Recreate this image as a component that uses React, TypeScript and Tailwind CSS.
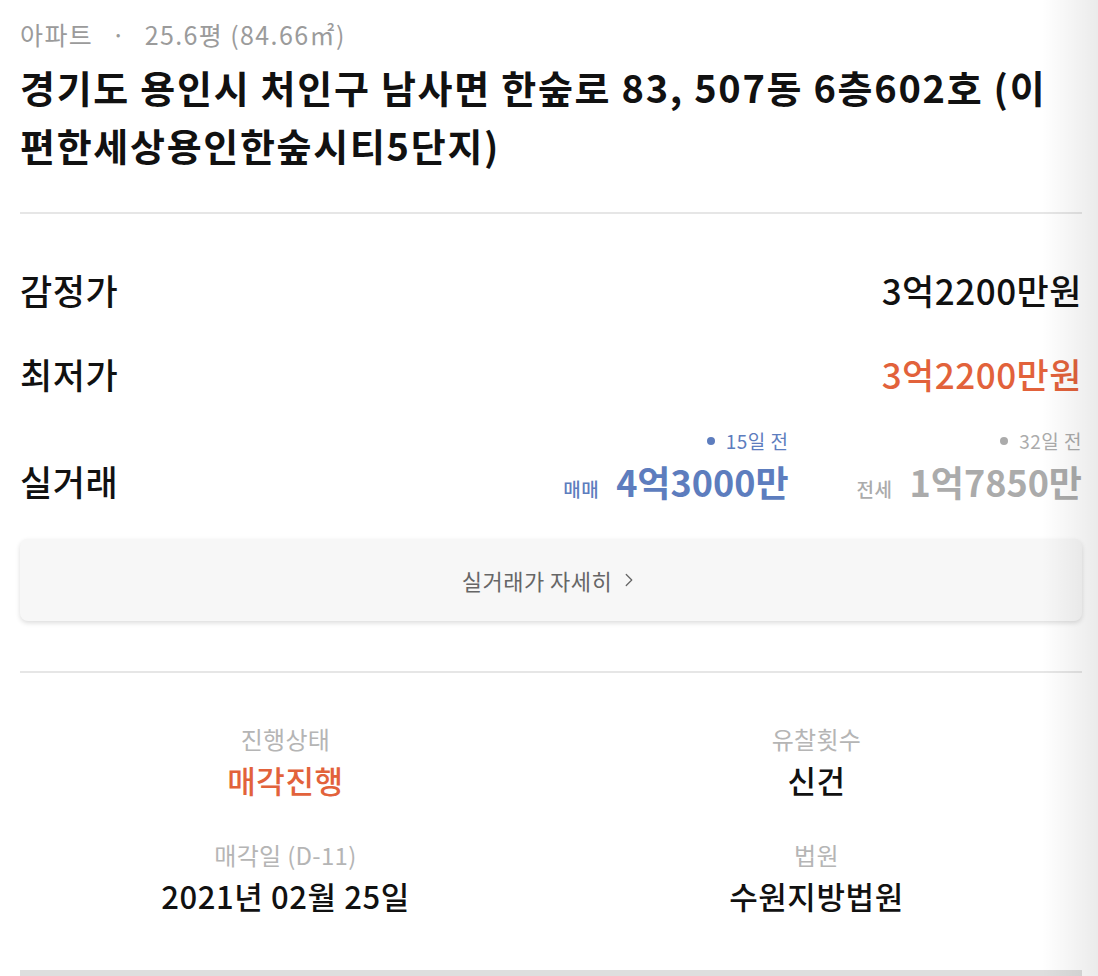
import { ChevronRight } from 'lucide-react'

const font = { fontFamily: '"Noto Sans CJK KR", "Noto Sans", sans-serif' }

const priceRows = [
  { label: '감정가', value: '3억2200만원', tone: 'text-[#111111]' },
  { label: '최저가', value: '3억2200만원', tone: 'text-[#e2623b]' },
]

const deals = [
  { kind: '매매', amount: '4억3000만', ago: '15일 전', tone: 'text-[#5d7dbe]', dot: 'bg-[#5d7dbe]' },
  { kind: '전세', amount: '1억7850만', ago: '32일 전', tone: 'text-[#ababab]', dot: 'bg-[#ababab]' },
]

const facts = [
  { label: '진행상태', value: '매각진행', tone: 'text-[#e2623b]' },
  { label: '유찰횟수', value: '신건', tone: 'text-[#111111]' },
  { label: '매각일 (D-11)', value: '2021년 02월 25일', tone: 'text-[#111111]' },
  { label: '법원', value: '수원지방법원', tone: 'text-[#111111]' },
]

export default function App() {
  return (
    <div style={font} className="relative min-h-[976px] overflow-hidden bg-white">
      <div className="pl-5 pr-4 pt-[17px]">
        <p className="text-[25px] leading-[34px] tracking-[1.4px] text-[#9b9b9b]">
          아파트 <span className="mx-[11px]">·</span> 25.6평 (84.66㎡)
        </p>
        <h1 className="mt-[7px] text-[38px] font-bold leading-[58px] tracking-[1.7px] text-[#111111]">
          경기도 용인시 처인구 남사면 한숲로 83, 507동 6층602호 (이<br />편한세상용인한숲시티5단지)
        </h1>

        <div className="mt-[38px] h-[2px] bg-[#e6e6e6]" />

        <div className="mt-[54px] flex flex-col gap-[40px]">
          {priceRows.map((row) => (
            <div key={row.label} className="flex items-center justify-between leading-[44px] tracking-[0.5px]">
              <span className="text-[35px] font-medium text-[#111111]">{row.label}</span>
              <span className={`text-[35px] font-medium ${row.tone}`}>{row.value}</span>
            </div>
          ))}
        </div>

        <div className="mt-[33px] flex items-end justify-between">
          <span className="text-[35px] font-medium leading-[44px] tracking-[0.5px] text-[#111111]">실거래</span>
          <div className="flex items-end gap-[68px]">
            {deals.map((d) => (
              <div key={d.kind} className={`flex flex-col items-end ${d.tone}`}>
                <div className="flex items-center gap-[11px] text-[19px] leading-[24px] tracking-[0.5px]">
                  <span className={`h-[8px] w-[8px] rounded-full ${d.dot}`} />
                  <span>{d.ago}</span>
                </div>
                <div className="mt-[6px] flex h-[44px] items-baseline gap-[17px]">
                  <span className="text-[19px] font-medium leading-[24px] tracking-[0.5px]">{d.kind}</span>
                  <span className="text-[36px] font-bold leading-[44px]">{d.amount}</span>
                </div>
              </div>
            ))}
          </div>
        </div>

        <button className="mt-[36px] flex h-[82px] w-full items-center justify-center gap-[6px] rounded-[8px] bg-[#f7f7f7] text-[22px] tracking-[0.5px] text-[#666666] shadow-[0_2px_5px_rgba(0,0,0,0.14)]">
          실거래가 자세히
          <ChevronRight className="h-[22px] w-[22px]" strokeWidth={1.4} />
        </button>

        <div className="mt-[50px] h-[2px] bg-[#e6e6e6]" />

        <div className="mt-[51px] grid grid-cols-2 gap-y-[40px]">
          {facts.map((f) => (
            <div key={f.label} className="flex flex-col items-center">
              <span className="text-[24px] leading-[30px] tracking-[0.3px] text-[#b5b5b5]">{f.label}</span>
              <span className={`mt-[6px] text-[31px] font-medium leading-[40px] tracking-[0.6px] ${f.tone}`}>{f.value}</span>
            </div>
          ))}
        </div>

        <div className="mt-[54px] h-[6px] bg-[#dedede]" />
      </div>

      <div className="pointer-events-none absolute right-0 top-0 h-full w-[56px] bg-gradient-to-r from-transparent to-black/[0.08]" />
    </div>
  )
}
